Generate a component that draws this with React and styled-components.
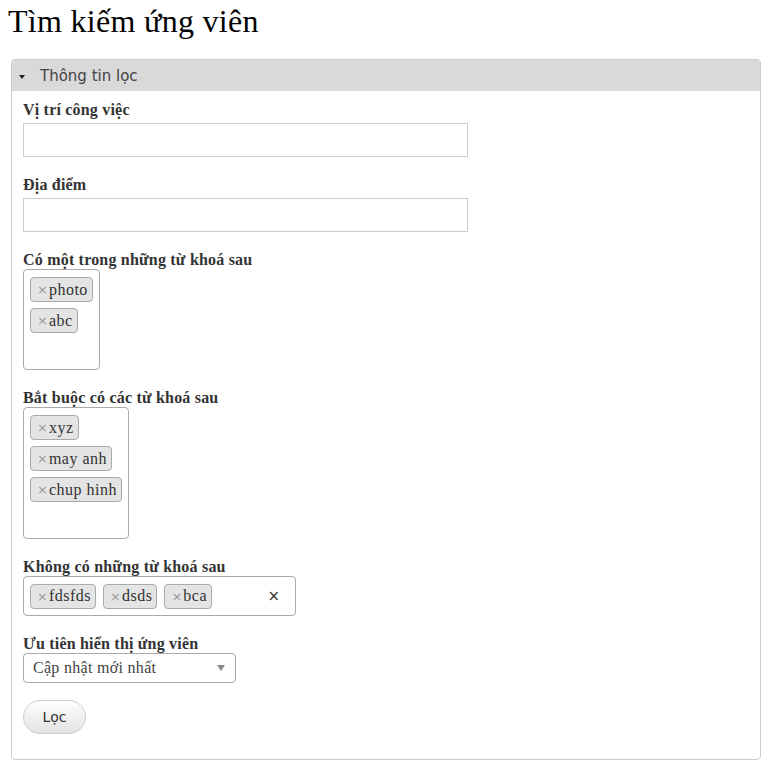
import React from 'react';
import styled, { createGlobalStyle } from 'styled-components';

const GlobalStyle = createGlobalStyle`
  body {
    margin: 0;
    background: #fff;
    font-family: "Liberation Serif", serif;
    color: #333;
  }
`;

const Page = styled.div`
  padding: 5px 8px 12px;
`;

const Title = styled.h1`
  margin: 0 0 22px;
  font-family: "Liberation Serif", serif;
  font-weight: normal;
  font-size: 32px;
  line-height: 32px;
  letter-spacing: 0.3px;
  color: #000;
`;

const Panel = styled.section`
  margin: 0 3px;
  border: 1px solid #ccc;
  border-radius: 4px;
`;

const PanelHeader = styled.div`
  display: flex;
  align-items: center;
  gap: 15px;
  height: 31px;
  padding: 0 7px;
  background: #d9d9d9;
  border-radius: 3px 3px 0 0;
  font-family: "DejaVu Sans", sans-serif;
  font-size: 15px;
  color: #444;
`;

const Caret = styled.span`
  width: 0;
  height: 0;
  margin-top: 3px;
  border-left: 3px solid transparent;
  border-right: 3px solid transparent;
  border-top: 4px solid #222;
`;

const PanelBody = styled.div`
  padding: 9px 11px 25px;
`;

const Field = styled.div`
  margin-bottom: 18px;
`;

const Label = styled.label`
  display: block;
  padding-top: 1px;
  font-weight: bold;
  font-size: 16px;
  line-height: 18px;
  letter-spacing: 0.2px;
  color: #333;
`;

const TextInput = styled.input`
  display: block;
  box-sizing: border-box;
  width: 445px;
  height: 34px;
  margin-top: 4px;
  border: 1px solid #ccc;
  padding: 4px 8px;
  font: 16px "Liberation Serif", serif;
  outline: none;
`;

const TagBox = styled.div`
  display: ${p => (p.$inline ? 'flex' : 'inline-flex')};
  flex-direction: ${p => (p.$inline ? 'row' : 'column')};
  align-items: ${p => (p.$inline ? 'center' : 'flex-start')};
  position: relative;
  box-sizing: border-box;
  width: ${p => (p.$inline ? '273px' : 'auto')};
  min-height: ${p => (p.$inline ? '40px' : '0')};
  padding: ${p => (p.$inline ? '0 6px' : '0 6px 37px')};
  gap: ${p => (p.$inline ? '7px' : '0')};
  border: 1px solid #aaa;
  border-radius: 4px;
  background: #fff;
`;

const Tag = styled.span`
  display: inline-flex;
  align-items: center;
  box-sizing: border-box;
  height: 25px;
  margin-top: ${p => (p.$inline ? '0' : '7px')};
  margin-bottom: ${p => (p.$inline ? '0' : '-1px')};
  padding: 0 4px 0 6px;
  border: 1px solid #aaa;
  border-radius: 4px;
  background: #e4e4e4;
  font-size: 16px;
  letter-spacing: 0.5px;
  color: #333;
  white-space: nowrap;
`;

const TagRemove = styled.span`
  margin-right: 1px;
  color: #999;
  font-family: "DejaVu Sans", sans-serif;
  font-size: 13px;
  letter-spacing: 0;
`;

const ClearAll = styled.span`
  position: absolute;
  right: 15px;
  top: 50%;
  transform: translateY(-50%);
  font-family: "DejaVu Sans", sans-serif;
  font-size: 15px;
  color: #333;
`;

const Select = styled.div`
  display: flex;
  align-items: center;
  justify-content: space-between;
  box-sizing: border-box;
  width: 213px;
  height: 30px;
  padding: 0 10px 0 9px;
  border: 1px solid #aaa;
  border-radius: 4px;
  font-size: 16px;
  letter-spacing: 0.3px;
  color: #444;
`;

const SelectArrow = styled.span`
  width: 0;
  height: 0;
  border-left: 4px solid transparent;
  border-right: 4px solid transparent;
  border-top: 6px solid #888;
`;

const Button = styled.button`
  display: block;
  width: 63px;
  height: 34px;
  margin-top: -1px;
  border: 1px solid #ccc;
  border-radius: 17px;
  background: linear-gradient(#fefefe, #e3e3e3);
  font-family: "DejaVu Sans", sans-serif;
  font-size: 14px;
  color: #333;
  cursor: pointer;
`;

function TagList({ tags, inline }) {
  return (
    <TagBox $inline={inline}>
      {tags.map(tag => (
        <Tag key={tag} $inline={inline}>
          <TagRemove>×</TagRemove>
          {tag}
        </Tag>
      ))}
      {inline && <ClearAll>×</ClearAll>}
    </TagBox>
  );
}

export default function App() {
  return (
    <Page>
      <GlobalStyle />
      <Title>Tìm kiếm ứng viên</Title>
      <Panel>
        <PanelHeader>
          <Caret />
          Thông tin lọc
        </PanelHeader>
        <PanelBody>
          <Field>
            <Label>Vị trí công việc</Label>
            <TextInput type="text" />
          </Field>
          <Field>
            <Label>Địa điểm</Label>
            <TextInput type="text" />
          </Field>
          <Field>
            <Label>Có một trong những từ khoá sau</Label>
            <TagList tags={['photo', 'abc']} />
          </Field>
          <Field>
            <Label>Bắt buộc có các từ khoá sau</Label>
            <TagList tags={['xyz', 'may anh', 'chup hinh']} />
          </Field>
          <Field>
            <Label>Không có những từ khoá sau</Label>
            <TagList tags={['fdsfds', 'dsds', 'bca']} inline />
          </Field>
          <Field>
            <Label>Ưu tiên hiển thị ứng viên</Label>
            <Select>
              Cập nhật mới nhất
              <SelectArrow />
            </Select>
          </Field>
          <Button type="button">Lọc</Button>
        </PanelBody>
      </Panel>
    </Page>
  );
}
